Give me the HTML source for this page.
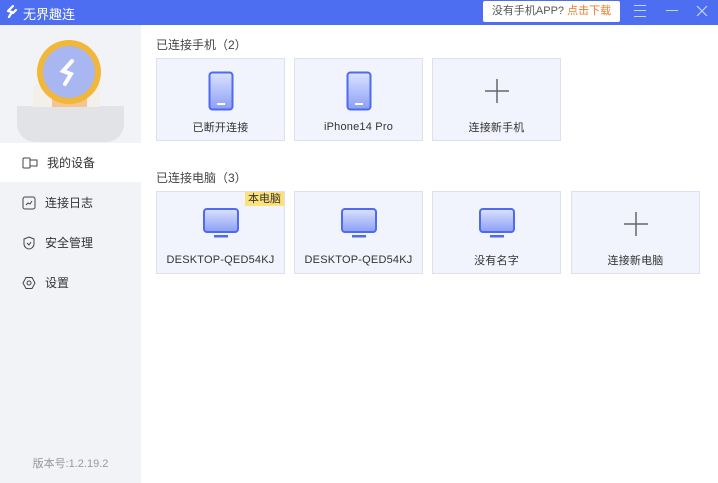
<!DOCTYPE html><html><head><meta charset="utf-8"><style>
*{margin:0;padding:0;box-sizing:border-box}
body{width:718px;height:483px;overflow:hidden;font-family:"Liberation Sans","Noto Sans CJK SC",sans-serif;background:#fff;position:relative;font-size:12px;color:#333}
.top{position:absolute;left:0;top:0;width:718px;height:25px;background:#4e6ef2;color:#fff}
.side{position:absolute;left:0;top:25px;width:141px;height:458px;background:#f2f3f7}
.nav{position:absolute;left:0;width:141px;height:39px;display:flex;align-items:center;padding-left:22px;font-size:12px;color:#333}
.nav svg{margin-right:9px}
.card{position:absolute;width:129px;height:83px;background:#f2f4fd;border:1px solid #dde0ee}
.card .lbl{position:absolute;left:0;right:0;top:61px;height:14px;line-height:14px;text-align:center;font-size:11px;color:#333;letter-spacing:0.2px}
.card .cj{top:62px}
.h{position:absolute;left:156px;font-size:12px;color:#444;line-height:16px}
</style></head><body>
<div class="top">
<svg style="position:absolute;left:6px;top:5px" width="12" height="14" viewBox="0 0 12 14"><path d="M7 1L2 6l4 1-3 5" stroke="#fff" stroke-width="2.2" fill="none" stroke-linecap="round" stroke-linejoin="round"/><path d="M10 5L7 8" stroke="#fff" stroke-width="2.2" stroke-linecap="round"/></svg>
<div style="position:absolute;left:23px;top:4px;font-size:13px">无界趣连</div>
<div style="position:absolute;left:483px;top:1px;width:137px;height:21px;background:#fff;border-radius:2px;font-size:11px;line-height:21px;text-align:center;color:#555">没有手机APP? <span style="color:#f07a2a">点击下载</span></div>
<div style="position:absolute;left:634px;top:5px;width:12px;height:12px;border-top:1px solid #c9d3ff;border-bottom:1px solid #c9d3ff"></div>
<div style="position:absolute;left:634px;top:10px;width:12px;height:1px;background:#c9d3ff"></div>
<div style="position:absolute;left:666px;top:10px;width:12px;height:1px;background:#c9d3ff"></div>
<svg style="position:absolute;left:696px;top:5px" width="12" height="12"><path d="M1 1L11 11M11 1L1 11" stroke="#c9d3ff" stroke-width="1.2"/></svg>
</div>
<div class="side">
<div style="position:absolute;left:17px;top:81px;width:107px;height:36px;background:#e2e3e6;border-radius:0 0 18px 18px"></div>
<div style="position:absolute;left:33px;top:60px;width:67px;height:22px;background:#f3efe9"></div>
<div style="position:absolute;left:52px;top:60px;width:35px;height:22px;background:#f6c48e"></div>
<div style="position:absolute;left:37px;top:15px;width:64px;height:64px;border-radius:50%;background:#f1b73a"></div>
<div style="position:absolute;left:43px;top:21px;width:52px;height:52px;border-radius:50%;background:#a8b6f2"></div>
<svg style="position:absolute;left:57px;top:34px" width="24" height="28"><path d="M15 2L6 12l8 3-6 10" stroke="#fff" stroke-width="4" fill="none" stroke-linecap="round"/></svg>
<div class="nav" style="top:118px;background:#fff"><svg width="16" height="12"><rect x="1" y="1" width="7" height="10" rx="1" fill="none" stroke="#444"/><rect x="8" y="3" width="7" height="6" fill="none" stroke="#444"/></svg>我的设备</div>
<div class="nav" style="top:158px"><svg width="14" height="14"><rect x="1" y="1" width="12" height="12" rx="2" fill="none" stroke="#444"/><path d="M4 9l2-2 2 1 2-3" stroke="#444" fill="none"/></svg>连接日志</div>
<div class="nav" style="top:198px"><svg width="14" height="14"><path d="M7 1L12 3v5c0 3-3 5-5 5S2 11 2 8V3z" fill="none" stroke="#444"/><path d="M5 7l2 2 2-3" stroke="#444" fill="none"/></svg>安全管理</div>
<div class="nav" style="top:238px"><svg width="14" height="14"><path d="M4 1.5h6L13 7l-3 5.5H4L1 7z" fill="none" stroke="#444"/><circle cx="7" cy="7" r="2" fill="none" stroke="#444"/></svg>设置</div>
<div style="position:absolute;left:0;width:141px;top:430px;text-align:center;font-size:11px;color:#999">版本号:1.2.19.2</div>
</div>
<div class="h" style="top:37px">已连接手机（2）</div>
<div class="card" style="left:156px;top:58px"><svg style="position:absolute;left:51px;top:12px" width="26" height="40"><defs><linearGradient id="g" x1="0" y1="0" x2="0" y2="1"><stop offset="0" stop-color="#dbe2ff"/><stop offset="1" stop-color="#8b9ff5"/></linearGradient></defs><rect x="1.5" y="1.5" width="23" height="37" rx="3" fill="url(#g)" stroke="#4d6af0" stroke-width="2"/><rect x="9" y="32" width="8" height="2" fill="#fff"/></svg><div class="lbl cj">已断开连接</div></div>
<div class="card" style="left:294px;top:58px"><svg style="position:absolute;left:51px;top:12px" width="26" height="40"><rect x="1.5" y="1.5" width="23" height="37" rx="3" fill="url(#g)" stroke="#4d6af0" stroke-width="2"/><rect x="9" y="32" width="8" height="2" fill="#fff"/></svg><div class="lbl">iPhone14 Pro</div></div>
<div class="card" style="left:432px;top:58px"><svg style="position:absolute;left:52px;top:20px" width="24" height="24"><path d="M12 0V24M0 12H24" stroke="#666" stroke-width="1.5"/></svg><div class="lbl cj">连接新手机</div></div>
<div class="h" style="top:170px">已连接电脑（3）</div>
<div class="card" style="left:156px;top:191px"><div style="position:absolute;right:0;top:0;background:#fde27a;font-size:11px;padding:0 3px;line-height:14px">本电脑</div><svg style="position:absolute;left:46px;top:16px" width="36" height="30"><defs><linearGradient id="h" x1="0" y1="0" x2="0" y2="1"><stop offset="0" stop-color="#dbe2ff"/><stop offset="1" stop-color="#8b9ff5"/></linearGradient></defs><rect x="1" y="1" width="34" height="23" rx="3" fill="url(#h)" stroke="#4d6af0" stroke-width="2"/><rect x="11" y="27" width="14" height="2.5" fill="#4d6af0"/></svg><div class="lbl">DESKTOP-QED54KJ</div></div>
<div class="card" style="left:294px;top:191px"><svg style="position:absolute;left:46px;top:16px" width="36" height="30"><rect x="1" y="1" width="34" height="23" rx="3" fill="url(#h)" stroke="#4d6af0" stroke-width="2"/><rect x="11" y="27" width="14" height="2.5" fill="#4d6af0"/></svg><div class="lbl">DESKTOP-QED54KJ</div></div>
<div class="card" style="left:432px;top:191px"><svg style="position:absolute;left:46px;top:16px" width="36" height="30"><rect x="1" y="1" width="34" height="23" rx="3" fill="url(#h)" stroke="#4d6af0" stroke-width="2"/><rect x="11" y="27" width="14" height="2.5" fill="#4d6af0"/></svg><div class="lbl cj">没有名字</div></div>
<div class="card" style="left:571px;top:191px"><svg style="position:absolute;left:52px;top:20px" width="24" height="24"><path d="M12 0V24M0 12H24" stroke="#666" stroke-width="1.5"/></svg><div class="lbl cj">连接新电脑</div></div>
</body></html>
